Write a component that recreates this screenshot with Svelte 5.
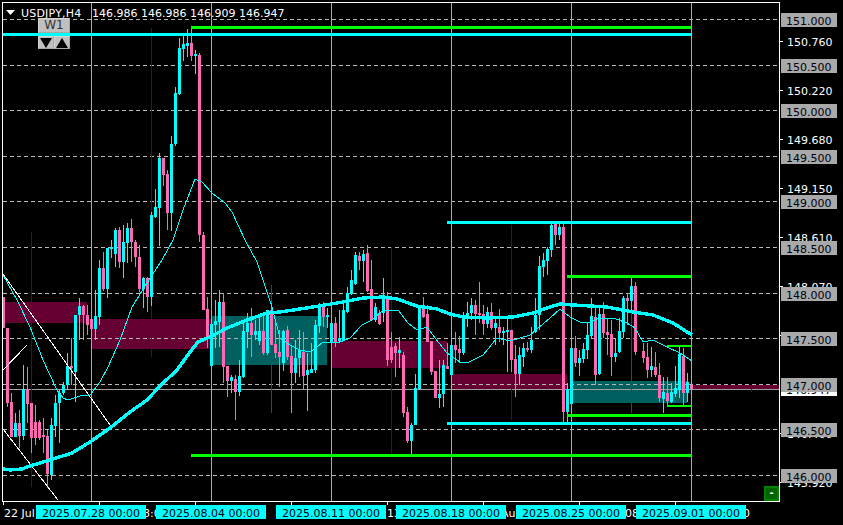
<script>
  // [x, bodyTop, bodyBottom, wickTop, wickBottom, up]
  const bars = [
    [3,297,328,297,328,0],[7,328,403,328,407,0],[11,402,437,393,437,0],[15,423,437,413,437,1],[19,423,436,410,448,0],
    [23,389,436,365,440,1],[27,389,404,367,423,0],[31,403,438,403,453,0],[35,422,438,405,445,0],[39,422,438,420,440,0],
    [43,435,437,418,453,0],[47,436,474,430,488,0],[51,425,475,418,480,1],[55,403,426,395,437,1],[59,393,403,390,443,1],
    [63,385,393,382,395,1],[67,366,385,353,390,1],[71,366,368,338,385,0],[75,315,372,315,402,1],[79,306,315,298,340,1],
    [83,306,315,305,340,0],[87,315,325,305,335,0],[91,319,329,310,335,0],[95,316,329,290,340,1],[99,268,317,260,325,1],
    [103,268,289,252,291,0],[107,248,289,248,298,1],[111,247,249,240,258,1],[115,230,254,228,267,1],[119,230,262,227,268,0],
    [123,242,262,225,278,1],[127,228,243,223,263,1],[131,228,242,219,262,0],[135,242,257,240,267,0],[139,257,289,245,292,0],
    [143,278,289,277,308,1],[147,278,297,277,312,0],[151,215,297,212,306,1],[155,207,217,189,218,1],[159,158,208,153,246,1],
    [163,158,175,158,186,0],[167,174,213,170,230,0],[171,144,213,136,231,1],[175,93,144,87,146,1],[179,48,94,38,95,1],
    [183,44,49,36,61,1],[187,43,46,29,57,1],[191,43,56,28,61,0],[195,54,56,50,74,1],[199,55,235,53,242,0],
    [203,235,310,232,310,0],[207,309,338,297,348,0],[211,324,366,320,366,1],[215,321,325,300,348,1],[219,302,322,290,347,1],
    [223,302,367,293,383,0],[227,366,381,366,397,0],[231,377,381,375,393,1],[235,379,392,375,420,0],[239,376,392,360,396,1],
    [243,331,377,323,378,1],[247,323,332,313,348,1],[251,323,335,308,357,0],[255,331,335,320,340,1],[259,331,341,315,345,1],
    [263,331,353,313,355,0],[267,310,353,310,355,1],[271,310,345,303,345,0],[275,344,353,323,358,0],[279,352,357,330,387,0],
    [283,331,363,330,371,1],[287,330,357,326,360,0],[291,356,373,345,413,0],[295,358,373,340,383,1],[299,350,358,330,377,1],
    [303,352,376,332,389,0],[307,370,375,353,411,1],[311,369,373,343,373,1],[315,325,370,320,373,1],[319,307,326,303,333,1],
    [323,306,317,302,327,0],[327,315,317,308,328,1],[331,323,342,316,342,1],[335,323,342,317,347,0],[339,338,341,310,343,1],
    [343,310,340,300,340,1],[347,293,312,287,313,1],[351,280,294,270,295,1],[355,255,284,252,285,1],[359,256,261,252,270,0],
    [363,254,261,250,282,1],[367,253,291,245,292,0],[371,289,320,260,320,0],[375,307,320,303,322,1],[379,313,324,310,325,0],
    [383,297,313,278,322,1],[387,297,360,292,366,0],[391,347,360,332,363,0],[395,346,353,343,377,0],[399,350,353,337,368,1],
    [403,355,413,352,417,0],[407,412,441,407,443,0],[411,425,441,423,454,1],[415,388,425,374,425,1],[419,306,389,306,390,1],
    [423,307,317,297,318,0],[427,314,342,305,342,0],[431,341,372,341,375,0],[435,371,398,371,398,0],[439,394,398,360,408,1],
    [443,365,394,360,407,1],[447,366,369,343,368,0],[451,345,375,333,375,1],[455,345,350,332,363,0],[459,349,353,336,363,0],
    [463,317,353,312,355,1],[467,313,317,302,327,1],[471,305,313,298,320,1],[475,305,314,300,335,0],[479,313,315,282,323,0],
    [483,314,324,305,335,0],[487,312,324,307,328,1],[491,312,328,303,330,0],[495,323,328,317,345,1],[499,327,333,309,342,0],
    [503,331,333,327,345,1],[507,330,332,317,372,1],[511,330,360,330,372,0],[515,359,374,345,397,0],[519,355,374,347,385,1],
    [523,348,357,343,367,1],[527,348,350,342,352,0],[531,340,350,327,353,1],[535,315,332,298,333,1],[539,266,315,256,330,1],
    [543,260,267,253,277,1],[547,249,261,247,275,1],[551,225,250,224,257,1],[555,224,235,222,245,0],[559,227,235,224,240,1],
    [563,227,412,224,422,0],[567,389,412,383,422,1],[571,348,404,346,405,1],[575,348,363,336,367,0],[579,358,363,350,376,1],
    [583,349,359,343,363,1],[587,335,350,322,359,1],[591,316,336,298,338,1],[595,317,375,305,385,0],[599,314,374,307,375,1],
    [603,314,333,302,338,0],[607,332,335,318,355,0],[611,334,357,320,376,0],[615,353,357,338,362,1],[619,331,352,318,353,1],
    [623,298,332,296,338,1],[627,298,301,293,325,0],[631,286,301,278,310,1],[635,286,352,282,355,0],[643,351,358,343,363,0],
    [647,357,370,343,378,0],[651,366,370,347,377,1],[655,367,375,352,377,0],[659,375,398,363,402,0],[663,392,399,377,413,1],
    [667,393,401,377,405,0],[671,392,402,383,403,1],[675,388,394,366,397,1],[679,354,390,347,398,1],[683,356,393,348,405,0],
    [687,382,393,373,402,1],[691,385,389,384,390,0]
  ]
  const boxes = [
    [3,302,84,21,'maroon'],[91,319,120,30,'maroon'],[211,316,116,49,'teal'],[331,341,116,27,'maroon'],
    [451,374,116,15,'maroon'],[571,381,116,22,'teal'],[691,385,89,5,'maroon']
  ]
  const weekWicks = [
    [31,232,487,'maroon'],[151,28,357,'maroon'],[271,285,413,'teal'],[391,247,453,'maroon'],
    [511,225,420,'maroon'],[631,277,413,'teal'],[751,389,392,'maroon']
  ]
  const gridY = [19,65,110,156,201,247,293,338,384,429,475]
  const sessionX = [91,211,331,451,571,691]
  const slowMa = [[3,469],[10,470],[22,469],[30,466],[50,460],[72,453],[90,442],[110,428],[130,412],[147,400],[160,386],[177,370],[190,352],[198,342],[210,337],[227,328],[247,320],[267,313],[280,312],[313,307],[343,302],[363,298],[383,297],[397,299],[417,306],[437,309],[450,314],[463,317],[487,318],[513,317],[533,313],[550,307],[560,304],[573,305],[607,307],[633,312],[653,315],[673,323],[692,335]]
  const fastMa = [[3,275],[17,300],[30,327],[43,360],[57,390],[63,398],[68,400],[80,396],[90,395],[100,382],[108,367],[120,340],[132,307],[147,283],[162,260],[173,240],[183,210],[195,179],[202,182],[212,193],[225,203],[232,212],[245,240],[257,262],[272,307],[280,338],[290,345],[300,350],[310,352],[317,347],[323,342],[340,342],[350,338],[362,325],[372,320],[383,310],[398,310],[408,323],[417,330],[427,327],[435,338],[447,353],[460,362],[467,363],[483,355],[497,338],[510,341],[530,335],[550,318],[560,309],[570,317],[580,322],[590,323],[598,318],[613,318],[627,323],[635,328],[643,342],[653,340],[667,347],[680,353],[692,361]]
  const levels = [
    [191,692,26,3,'green'],[191,692,454,3,'green'],[567,692,275,3,'green'],[567,692,414,3,'green'],
    [667,692,345,2,'green'],[667,692,405,2,'green'],
    [3,692,33,3,'cyan'],[447,692,221,3,'cyan'],[447,692,422,3,'cyan']
  ]
  const priceTicks = [[41,'150.760'],[90,'150.220'],[139,'149.680'],[188,'149.150'],[237,'148.610'],[286,'148.070'],[335,'147.530'],[433,'146.460'],[482,'145.920']]
  const roundPrices = [[13,'151.000'],[59,'150.500'],[104,'150.000'],[150,'149.500'],[195,'149.000'],[241,'148.500'],[287,'148.000'],[332,'147.500'],[378,'147.000'],[423,'146.500'],[469,'146.000']]
  const timeTicks = [3,99,195,291,387,483,579,675]
  // only the bits of the axis dates that stick out between the week labels
  const timeUnder = [[4,'22 Jul'],[143,'8:0'],[387,'13'],[501,'Au'],[625,'08'],[743,'0']]
  const weekLabels = [[36,'2025.07.28 00:00'],[156,'2025.08.04 00:00'],[276,'2025.08.11 00:00'],[396,'2025.08.18 00:00'],[516,'2025.08.25 00:00'],[636,'2025.09.01 00:00']]
  const pts = (line) => line.map((p) => p.join(',')).join(' ')
</script>

<div class="terminal">
  <div class="plot">
    <svg viewBox="0 0 780 502" width="780" height="502">
      {#each boxes as [x, y, w, h, kind]}
        <rect {x} {y} width={w} height={h} class={kind} />
      {/each}
      {#each gridY as y}
        <line x1="3" x2="779" y1={y + 0.5} y2={y + 0.5} class="grid" />
      {/each}
      <line x1="3" x2="779" y1="389.5" y2="389.5" class="bid" />
      {#each weekWicks as [x, y1, y2, kind]}
        <rect {x} y={y1} width="1" height={y2 - y1} class={kind} />
      {/each}
      {#each bars as [x, top, bottom, wickTop, wickBottom, up]}
        <rect {x} y={wickTop} width="1" height={wickBottom - wickTop} class={up ? 'up' : 'down'} />
        <rect x={x - 1} y={top} width="3" height={bottom - top} class={up ? 'up' : 'down'} />
      {/each}
      {#each sessionX as x}
        <rect {x} y="3" width="1" height="498" class="session" />
      {/each}
      <polyline points="3,274 110,425" class="trend" />
      <polyline points="3,429 58,500" class="trend" />
      <polyline points="3,370 27,345" class="trend" />
      <polyline points={pts(fastMa)} class="ma fast" />
      <polyline points={pts(slowMa)} class="ma slow" />
      {#each levels as [x1, x2, y, h, kind]}
        <rect x={x1} {y} width={x2 - x1} height={h} class={'level ' + kind} />
      {/each}
      <path d="M2.5 3V501.5H779.5V2.5H2" class="frame" />
      <polygon points="6,10 15,10 10.5,15" class="caret" />
      <text x="21" y="17" class="label head">USDJPY,H4</text>
      <text x="92" y="17" class="label">146.986 146.986 146.909 146.947</text>
    </svg>

    <div class="period">
      <div class="btn wide">W1</div>
      <div class="arrows">
        <div class="btn"><svg viewBox="0 0 12 10" width="12" height="10"><polygon points="0,0 12,0 6,10" /></svg></div>
        <div class="btn"><svg viewBox="0 0 12 10" width="12" height="10"><polygon points="0,10 12,10 6,0" /></svg></div>
      </div>
    </div>
    <div class="collapse">-</div>
  </div>

  <svg class="prices" viewBox="780 0 63 502" width="63" height="502">
    {#each priceTicks as [y, text]}
      <rect x="780" {y} width="3" height="1" class="white" />
      <text x="787" y={y + 5} class="label">{text}</text>
    {/each}
    <rect x="781" y="382" width="56" height="14" class="white" />
    <text x="786" y="394" class="dark">146.947</text>
    {#each roundPrices as [y, text]}
      <rect x="781" {y} width="56" height="14" class="chip" />
      <text x="786" y={y + 12} class="dark">{text}</text>
    {/each}
  </svg>

  <svg class="times" viewBox="0 502 843 23" width="843" height="23">
    {#each timeTicks as x}
      <rect {x} y="502" width="1" height="3" class="white" />
    {/each}
    {#each timeUnder as [x, text]}
      <text {x} y="517" class="label">{text}</text>
    {/each}
    {#each weekLabels as [x, text]}
      <rect {x} y="505" width="110" height="14" class="cyan-chip" />
      <text x={x + 55} y="517" class="dark mid">{text}</text>
    {/each}
  </svg>
</div>

<style>
  :global(body) {
    margin: 0;
    background: #000;
  }
  .terminal {
    width: 843px;
    height: 525px;
    overflow: hidden;
    background: #000;
    display: grid;
    grid-template-columns: 780px 63px;
    grid-template-rows: 502px 23px;
  }
  svg {
    display: block;
  }
  .plot {
    position: relative;
  }
  .times {
    grid-column: 1 / 3;
  }
  .plot svg rect,
  .prices rect,
  .times rect,
  .grid,
  .bid,
  .frame {
    shape-rendering: crispEdges;
  }
  text {
    font-family: "DejaVu Sans", Verdana, sans-serif;
    font-size: 11px;
  }
  .label {
    fill: #fff;
  }
  .head {
    letter-spacing: 0.2px;
  }
  .dark {
    fill: #00000f;
  }
  .mid {
    text-anchor: middle;
  }
  .maroon { fill: #660033; }
  .teal { fill: #006060; }
  .grid {
    stroke: #b8b8b8;
    stroke-width: 1;
    stroke-dasharray: 4 3;
  }
  .bid {
    stroke: #a0a0a0;
    stroke-width: 1;
  }
  .up { fill: #00ffff; }
  .down { fill: #ff69b4; }
  .session { fill: #22e6e6; }
  .trend {
    fill: none;
    stroke: #fff;
    stroke-width: 1;
    shape-rendering: crispEdges;
  }
  .ma {
    fill: none;
    stroke: #00ffff;
    stroke-linejoin: round;
    shape-rendering: crispEdges;
  }
  .fast {
    stroke-width: 1;
  }
  .slow {
    stroke-width: 3.4;
  }
  .level.green { fill: #00ff00; }
  .level.cyan { fill: #00ffff; }
  .frame {
    fill: none;
    stroke: #fff;
    stroke-width: 1;
  }
  .caret { fill: #fff; }
  .white { fill: #fff; }
  .chip { fill: #a9a9a9; }
  .cyan-chip { fill: #00ffff; }

  .period {
    position: absolute;
    left: 38px;
    top: 18px;
    width: 32px;
    display: flex;
    flex-direction: column;
    gap: 3px;
    font: 12px "DejaVu Sans", Verdana, sans-serif;
    color: #333;
  }
  .arrows {
    display: flex;
    height: 13px;
  }
  .btn {
    flex: 1;
    box-sizing: border-box;
    background: #c0c0c0;
    border: 1px solid;
    border-color: #d4d4d4 #a8a8a8 #a8a8a8 #d4d4d4;
    display: flex;
    align-items: center;
    justify-content: center;
  }
  .btn.wide {
    height: 15px;
    line-height: 13px;
  }
  .btn polygon {
    fill: #000;
  }
  .collapse {
    position: absolute;
    left: 764px;
    top: 486px;
    width: 15px;
    height: 15px;
    box-sizing: border-box;
    background: #006400;
    border: 2px solid #008000;
    color: #fff;
    font: bold 10px/10px "DejaVu Sans", sans-serif;
    text-align: center;
  }
</style>
